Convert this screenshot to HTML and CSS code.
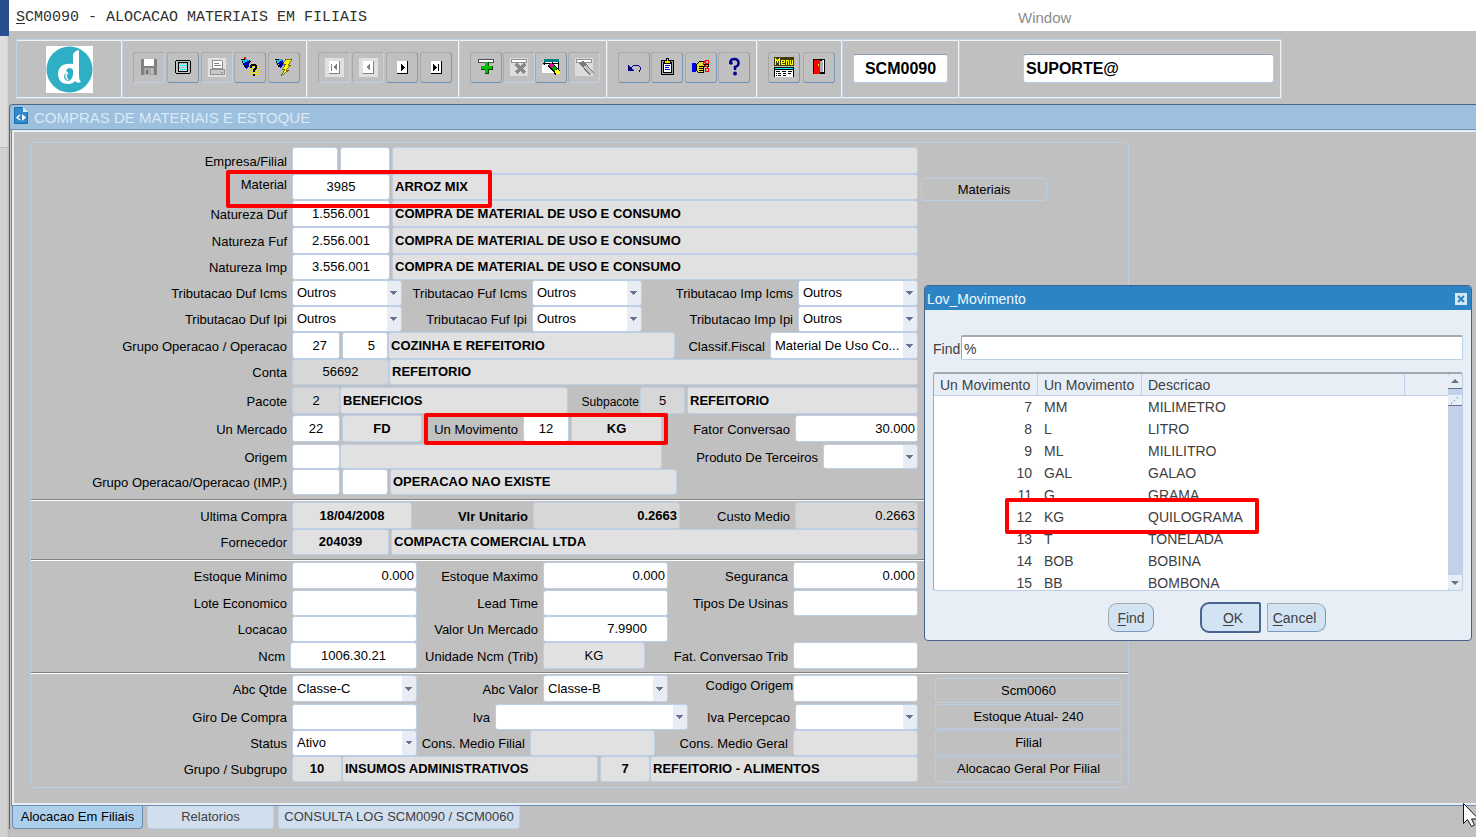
FILE: index.html
```html
<!DOCTYPE html>
<html lang="pt-BR">
<head>
<meta charset="utf-8">
<title>SCM0090 - Alocacao Materiais em Filiais</title>
<link rel="stylesheet" href="styles.css">
</head>
<body>
<div class="desktop">
  <div class="backdrop"><div class="backdrop-top"></div><div class="backdrop-mid"></div></div>
  <main class="app">
    <nav class="menubar">
      <a class="menu-main" href="#"><u>S</u>CM0090 - ALOCACAO MATERIAIS EM FILIAIS</a>
      <a class="menu-window" href="#">Window</a>
    </nav>

    <div class="toolbar">
      <div class="group group-logo">
        <svg class="logo" viewBox="0 0 47 47"><rect width="47" height="47" fill="#fff"/><circle cx="23.500" cy="23.500" r="23" fill="#2fafc5"/><path d="M33 4 Q26 5 27 12 V18 Q12 16 12 29 Q13 38 22 38 Q27 38 29 35 Q31 38 35 36 Q33 34 33 30 Z" fill="#fff"/><path d="M27 24 Q28 32 23 35 Q19 35 18 31 Q18 27 22 27 Q18 24 23 22 Q26 22 27 24Z" fill="#2fafc5"/><path d="M22 34 Q18 30 22 27" stroke="#fff" stroke-width="1.500" fill="none"/></svg>
      </div>
      <div class="group">
        <button class="tool off" aria-label="Salvar" disabled><svg viewBox="0 0 20 20"><path fill="#808080" d="M2 2h15l1 1v15H2z"/><path fill="#fff" d="M5 2h10v7H5z"/><path fill="#a8a8a8" d="M5 11h10v7H5z"/><path fill="#c0c0c0" d="M12 12h2v5h-2z"/><path fill="#707070" d="M7 13h2v4H7z"/></svg></button>
        <button class="tool" aria-label="Tela"><svg viewBox="0 0 20 20"><path d="M3 3h14v1h1v12h-1v1H3v-1H2V4h1z" fill="#000"/><path fill="#c0c0c0" d="M3 4h14v12H3z"/><path fill="#000" d="M5 5h10v10H5z"/><path fill="#c0e4e4" d="M6 6h8v8H6z"/><path fill="#00d8d8" d="M6 6h1v1H6zM8 6h1v1H8zM10 6h1v1h-1zM12 6h1v1h-1zM7 8h1v1H7zM9 8h1v1H9zM11 8h1v1h-1zM13 8h1v1h-1zM6 10h1v1H6zM8 10h1v1H8zM10 10h1v1h-1zM12 10h1v1h-1zM7 12h1v1H7zM9 12h1v1H9zM11 12h1v1h-1zM13 12h1v1h-1z"/></svg></button>
        <button class="tool off" aria-label="Imprimir" disabled><svg viewBox="0 0 20 20"><path fill="#e0e0e0" d="M1 1h18v19H1z"/><path fill="#fff" stroke="#909090" d="M5.500 3.500h9l1 1v7h-10z"/><path stroke="#808080" d="M7 6.500h5M7 8.500h7"/><path fill="#c8c8c8" stroke="#909090" d="M3.500 12.500h14v5h-14z"/><path stroke="#909090" d="M14 15.500h2"/></svg></button>
        <button class="tool" aria-label="Entrar consulta"><svg viewBox="0 0 20 20"><path fill="#00c8d8" d="M1 2h7l2 5H5z"/><path fill="#0000d0" d="M4 6l6-3-1 7-3 2z"/><path stroke="#000" fill="none" d="M1 2.500h4M2 4l3 6 5-5M9 3l2 2"/><path fill="#f00" d="M4 0h2v2H4z"/><path fill="none" stroke="#e8e000" stroke-dasharray="1 1" stroke-width="9" d="M14 9v10"/><path fill="none" stroke="#000" stroke-width="2" d="M11 11V9l1-1h3l1 1v2l-2 2v2M13 17.500h2"/></svg></button>
        <button class="tool" aria-label="Executar consulta"><svg viewBox="0 0 20 20"><path fill="#00c8d8" d="M1 2h7l2 5H5z"/><path fill="#0000d0" d="M4 6l5-3v6l-3 2z"/><path stroke="#000" fill="none" d="M1 2.500h4M2 4l3 6 5-5"/><path fill="#ff0" stroke="#504000" stroke-width=".7" d="M12 2h6l-4 6h3l-5 5h3l-8 6 4-7H8l4-5H9z"/></svg></button>
      </div>
      <div class="group">
        <button class="tool off" aria-label="Primeiro" disabled><svg viewBox="0 0 20 20"><path fill="#e0e0e0" d="M1 1h19v19H1z"/><path fill="#fff" d="M5 4h11v13H5z"/><path fill="#808080" d="M15 4h1v13H5v-1h10zM7 7h1v7H7zM13 7v7l-4-4z"/></svg></button>
        <button class="tool off" aria-label="Anterior" disabled><svg viewBox="0 0 20 20"><path fill="#e0e0e0" d="M1 1h19v19H1z"/><path fill="#fff" d="M5 4h11v13H5z"/><path fill="#808080" d="M15 4h1v13H5v-1h10zM12 7v7l-4-4z"/></svg></button>
        <button class="tool" aria-label="Proximo"><svg viewBox="0 0 20 20"><path fill="#fff" d="M5 4h11v13H5z"/><path d="M15 4h1v13H5v-1h10zM9 7v7l4-3.500z"/></svg></button>
        <button class="tool" aria-label="Ultimo"><svg viewBox="0 0 20 20"><path fill="#fff" d="M5 4h11v13H5z"/><path d="M15 4h1v13H5v-1h10zM7 7v7l4-3.500zM12 7h1v7h-1z"/></svg></button>
      </div>
      <div class="group">
        <button class="tool" aria-label="Inserir"><svg viewBox="0 0 20 20"><path fill="#fff" stroke="#505050" d="M2.500 2.500h15v3h-15z"/><path fill="#004800" d="M9 5h4v4h4v4h-4v4H9v-4H5V9h4z"/><path fill="#00c000" d="M9 5h3v4h4v3h-4v4H9v-4H5V9h4z"/></svg></button>
        <button class="tool off" aria-label="Remover" disabled><svg viewBox="0 0 20 20"><path fill="#dcdcdc" d="M1 1h18v18H1z"/><path fill="#fff" stroke="#909090" d="M2.500 2.500h15v3h-15z"/><path stroke="#888" stroke-width="3" d="M7 7l9 9M16 7l-9 9"/></svg></button>
        <button class="tool" aria-label="Limpar bloco"><svg viewBox="0 0 20 20"><path fill="#fff" stroke="#000" d="M3.500 2.500h14v13h-14z"/><path fill="#008080" d="M3 2h15v3H3z"/><path d="M2 6h15v1H2z"/><path fill="#fff" d="M1 8h13v8H1z"/><path stroke="#000" stroke-width="6" d="M9 7l8 9"/><path stroke="#f00090" stroke-width="4" d="M9 7l3 3"/><path stroke="#00a000" stroke-width="4" d="M12 10l3 3"/><path stroke="#ff0" stroke-width="4" d="M15 13l3 4"/></svg></button>
        <button class="tool off" aria-label="Limpar registro" disabled><svg viewBox="0 0 20 20"><path fill="#dcdcdc" d="M1 1h18v18H1z"/><path fill="#fff" stroke="#909090" d="M2.500 2.500h15v3h-15z"/><path stroke="#787878" stroke-width="5" d="M7 5l11 12"/><path stroke="#c8c8c8" stroke-width="3" d="M11 9l7 8"/></svg></button>
      </div>
      <div class="group">
        <button class="tool" aria-label="Desfazer"><svg viewBox="0 0 20 20"><path fill="#000080" d="M4 8v6h6z"/><path fill="none" stroke="#000080" stroke-width="1" d="M7 11l3-3h4l2 2v3l-1 2"/></svg></button>
        <button class="tool" aria-label="Lista"><svg viewBox="0 0 20 20"><path fill="#a0a0a0" stroke="#000" d="M4.500 3.500h12v14h-12z"/><path fill="#fff" stroke="#000" d="M6.500 5.500h8v10h-8z"/><path fill="#f0e000" stroke="#000" d="M7.500 3.500h2v-2h2v2h2v3h-6z"/><path stroke="#0000e0" d="M8 8.500h5M8 10.500h4M8 12.500h5"/></svg></button>
        <button class="tool" aria-label="Editar"><svg viewBox="0 0 20 20"><path fill="#00f" d="M1 6h4v9H1z"/><path fill="#e8d840" stroke="#000" d="M5.500 7.500l3-3h4v3h5v2h-5v6h-5l-2-2z"/><path stroke="#000" d="M8 9.500h5M8 11.500h5M8 13.500h4"/><g fill="none" stroke="#f00"><circle cx="16" cy="5" r="2"/><circle cx="16" cy="13" r="2"/><path d="M14 4l-2 3 5 4"/></g></svg></button>
        <button class="tool" aria-label="Ajuda"><svg class="smooth" viewBox="0 0 20 20"><path fill="none" stroke="#000090" stroke-width="2.500" d="M6.500 7V4.500Q7 2 10.500 2T14.500 5.500 11 10v3"/><circle cx="7" cy="6" r="1.800" fill="#000090"/><circle cx="11" cy="16.500" r="2" fill="#000090"/></svg></button>
      </div>
      <div class="group">
        <button class="tool" aria-label="Menu"><svg viewBox="0 0 20 20"><path d="M0 10h20v10H0z"/><path fill="#0ff" d="M1 11h18v1H1z"/><path fill="#fff" d="M1 13h18v7H1z"/><path stroke="#000" d="M2 14.500h4M8 14.500h4M14 14.500h4M2 16.500h1M4 16.500h3M9 16.500h3M14 16.500h3M2 18.500h1M4 18.500h3M9 18.500h3"/><path fill="#403c00" d="M0 0h20v9H0z"/><path fill="none" stroke="#ff0" d="M1.500 8V1M2.500 2v2M3.500 3v3M4.500 2v2M5.500 1v7M10.500 7.500h-3v-4h3v2h-3M12.500 8V3.500h2V8M16.500 3v4.500h2V3"/></svg></button>
        <button class="tool" aria-label="Sair"><svg viewBox="0 0 20 20"><path d="M4 2h12v15H4z"/><path fill="#fff" d="M13 3h2v12h-2z"/><path fill="#b0b0b0" d="M11 4h3v11h-3z"/><path fill="#f00" d="M5 3h5l1 1v13H5z"/><path fill="#ff0" d="M9 7h1v2H9z"/></svg></button>
      </div>
      <div class="group group-code"><input class="bar-input center" value="SCM0090" aria-label="Programa"></div>
      <div class="group group-user"><input class="bar-input" value="SUPORTE@" aria-label="Usuario"></div>
    </div>

    <section class="window">
      <header class="window-title">
        <svg class="doc-icon" viewBox="0 0 14 17"><path fill="#2f8bcb" stroke="#1b6fae" d="M.5.500h8l5 5v11H.5z"/><path fill="#d8ecfa" d="M9 0l5 5H9z"/><path fill="none" stroke="#fff" stroke-width="1.500" d="M6 8L3 10.500 6 13"/><path fill="#fff" d="M8 7v7l4-3.500z"/></svg>
        <h1>COMPRAS DE MATERIAIS E ESTOQUE</h1>
      </header>
      <div class="frame">
        <form class="panel">
          <div class="section">
            <div class="rows rows-a">
              <div class="row c-empresa"><label for="empresa">Empresa/Filial</label><input id="empresa"><input class="gap" aria-label="Filial"><input class="gap ro" readonly aria-label="Nome filial"></div>
              <div class="row c-nature"><label class="high" for="material">Material</label><input id="material" class="center" value="3985"><input class="gap ro b" readonly value="ARROZ MIX" aria-label="Nome material"><span class="mark mark-material"></span></div>
              <div class="row c-nature"><label for="duf">Natureza Duf</label><input id="duf" class="center" value="1.556.001"><input class="gap ro b" readonly value="COMPRA DE MATERIAL DE USO E CONSUMO" aria-label="Descricao Duf"></div>
              <div class="row c-nature"><label for="fuf">Natureza Fuf</label><input id="fuf" class="center" value="2.556.001"><input class="gap ro b" readonly value="COMPRA DE MATERIAL DE USO E CONSUMO" aria-label="Descricao Fuf"></div>
              <div class="row c-nature"><label for="imp">Natureza Imp</label><input id="imp" class="center" value="3.556.001"><input class="gap ro b" readonly value="COMPRA DE MATERIAL DE USO E CONSUMO" aria-label="Descricao Imp"></div>
              <div class="row c-trib"><label for="t1">Tributacao Duf Icms</label><select id="t1"><option>Outros</option></select><label for="t2">Tributacao Fuf Icms</label><select id="t2"><option>Outros</option></select><label for="t3">Tributacao Imp Icms</label><select id="t3"><option>Outros</option></select></div>
              <div class="row c-trib"><label for="t4">Tributacao Duf Ipi</label><select id="t4"><option>Outros</option></select><label for="t5">Tributacao Fuf Ipi</label><select id="t5"><option>Outros</option></select><label for="t6">Tributacao Imp Ipi</label><select id="t6"><option>Outros</option></select></div>
              <div class="row c-grupo"><label for="grupo">Grupo Operacao / Operacao</label><input id="grupo" class="right inset" value="27"><input class="gap right inset" value="5" aria-label="Operacao"><input class="ro b" readonly value="COZINHA E REFEITORIO" aria-label="Descricao operacao"><label for="fiscal">Classif.Fiscal</label><select id="fiscal"><option>Material De Uso Co...</option></select></div>
              <div class="row spaced c-conta"><label for="conta">Conta</label><input id="conta" class="dim center" readonly value="56692"><input class="ro b" readonly value="REFEITORIO" aria-label="Descricao conta"></div>
              <div class="row slim c-pacote"><label for="pacote">Pacote</label><input id="pacote" class="dim center" readonly value="2"><input class="ro b" readonly value="BENEFICIOS" aria-label="Descricao pacote"><label class="small" for="subpacote">Subpacote</label><input id="subpacote" class="dim center" readonly value="5"><input class="gap ro b" readonly value="REFEITORIO" aria-label="Descricao subpacote"></div>
              <div class="row spaced c-mercado"><label for="mercado">Un Mercado</label><input id="mercado" class="center" value="22"><input class="gap ro b center" readonly value="FD" aria-label="Sigla mercado"><div class="marked"><label for="mov">Un Movimento</label><input id="mov" class="center" value="12"><input class="gap ro b center" readonly value="KG" aria-label="Sigla movimento"><span class="mark mark-mov"></span></div><label for="fator">Fator Conversao</label><input id="fator" class="right" value="30.000"></div>
              <div class="row c-origem"><label for="origem">Origem</label><input id="origem"><input class="ro" readonly aria-label="Descricao origem"><label for="terceiros">Produto De Terceiros</label><select id="terceiros"><option></option></select></div>
              <div class="row c-oper"><label for="gimp">Grupo Operacao/Operacao (IMP.)</label><input id="gimp"><input class="gap" aria-label="Operacao importacao"><input class="gap ro b" readonly value="OPERACAO NAO EXISTE" aria-label="Descricao importacao"></div>
            </div>
            <div class="side side-a"><button type="button" class="action">Materiais</button></div>
          </div>
          <hr>
          <div class="section">
            <div class="rows rows-b">
              <div class="row c-compra"><label for="ultima">Ultima Compra</label><input id="ultima" class="ro b center" readonly value="18/04/2008"><label class="b" for="vlr">Vlr Unitario</label><input id="vlr" class="dim b right" readonly value="0.2663"><label for="custo">Custo Medio</label><input id="custo" class="dim right" readonly value="0.2663"></div>
              <div class="row c-conta"><label for="forn">Fornecedor</label><input id="forn" class="ro b center" readonly value="204039"><input class="ro b gap" readonly value="COMPACTA COMERCIAL LTDA" aria-label="Nome fornecedor"></div>
            </div>
          </div>
          <hr>
          <div class="section">
            <div class="rows rows-c">
              <div class="row slim c-est"><label for="emin">Estoque Minimo</label><input id="emin" class="right" value="0.000"><label for="emax">Estoque Maximo</label><input id="emax" class="right" value="0.000"><label for="seg">Seguranca</label><input id="seg" class="right" value="0.000"></div>
              <div class="row c-est"><label for="lote">Lote Economico</label><input id="lote"><label for="lead">Lead Time</label><input id="lead"><label for="usinas">Tipos De Usinas</label><input id="usinas"></div>
              <div class="row c-est"><label for="loc">Locacao</label><input id="loc"><label for="vmerc">Valor Un Mercado</label><input id="vmerc" class="right far" value="7.9900"></div>
              <div class="row c-ncm"><label for="ncm">Ncm</label><input id="ncm" class="center" value="1006.30.21"><label for="uncm">Unidade Ncm (Trib)</label><input id="uncm" class="ro center" readonly value="KG"><label for="fat">Fat. Conversao Trib</label><input id="fat"></div>
            </div>
          </div>
          <hr class="near">
          <div class="section">
            <div class="rows rows-d">
              <div class="row spaced c-est"><label for="abcq">Abc Qtde</label><select id="abcq"><option>Classe-C</option></select><label for="abcv">Abc Valor</label><select id="abcv"><option>Classe-B</option></select><label class="high tight" for="cod">Codigo Origem</label><input id="cod"></div>
              <div class="row c-iva"><label for="giro">Giro De Compra</label><input id="giro"><label for="iva">Iva</label><select id="iva"><option></option></select><label for="ivap">Iva Percepcao</label><select id="ivap"><option></option></select></div>
              <div class="row c-status"><label for="status">Status</label><select id="status"><option>Ativo</option></select><label for="cmf">Cons. Medio Filial</label><input id="cmf" class="ro" readonly><label for="cmg">Cons. Medio Geral</label><input id="cmg" class="ro" readonly></div>
              <div class="row c-sub"><label for="sub">Grupo / Subgrupo</label><input id="sub" class="ro b center" readonly value="10"><input class="ro b" readonly value="INSUMOS ADMINISTRATIVOS" aria-label="Descricao grupo"><input class="gap ro b center" readonly value="7" aria-label="Subgrupo"><input class="ro b" readonly value="REFEITORIO - ALIMENTOS" aria-label="Descricao subgrupo"></div>
            </div>
            <div class="side side-d">
              <button type="button" class="action">Scm0060</button>
              <button type="button" class="action">Estoque Atual- 240</button>
              <button type="button" class="action">Filial</button>
              <button type="button" class="action">Alocacao Geral Por Filial</button>
            </div>
          </div>
        </form>
      </div>
      <div class="tabs">
        <button class="tab active">Alocacao Em Filiais</button>
        <button class="tab">Relatorios</button>
        <button class="tab wide">CONSULTA LOG SCM0090 / SCM0060</button>
      </div>
    </section>
  </main>

  <section class="dialog">
    <header class="dialog-title"><h2>Lov_Movimento</h2><button class="close" aria-label="Fechar"><svg viewBox="0 0 12 12"><path stroke="#2c84c4" stroke-width="2" d="M3 3l6 6M9 3l-6 6"/></svg></button></header>
    <div class="dialog-body">
      <div class="find"><label for="find">Find</label><input id="find" value="%"></div>
      <div class="list">
        <table>
          <thead><tr><th class="num">Un Movimento</th><th class="code">Un Movimento</th><th>Descricao</th><th class="tail"></th></tr></thead>
          <tbody>
            <tr><td>7</td><td>MM</td><td>MILIMETRO</td><td></td></tr>
            <tr><td>8</td><td>L</td><td>LITRO</td><td></td></tr>
            <tr><td>9</td><td>ML</td><td>MILILITRO</td><td></td></tr>
            <tr><td>10</td><td>GAL</td><td>GALAO</td><td></td></tr>
            <tr><td>11</td><td>G</td><td>GRAMA</td><td></td></tr>
            <tr><td>12</td><td>KG</td><td>QUILOGRAMA</td><td></td></tr>
            <tr><td>13</td><td>T</td><td>TONELADA</td><td></td></tr>
            <tr><td>14</td><td>BOB</td><td>BOBINA</td><td></td></tr>
            <tr><td>15</td><td>BB</td><td>BOMBONA</td><td></td></tr>
          </tbody>
        </table>
        <div class="scroll">
          <button class="up" aria-label="Subir"><svg viewBox="0 0 14 14"><path fill="#68708c" d="M3 9l4-4 4 4z"/></svg></button>
          <div class="thumb"><svg viewBox="0 0 14 10"><path stroke="#7890b8" stroke-dasharray="2 2" d="M3 9l8-8"/></svg></div>
          <button class="down" aria-label="Descer"><svg viewBox="0 0 14 14"><path fill="#68708c" d="M3 5h8L7 9z"/></svg></button>
        </div>
        <span class="mark mark-row"></span>
      </div>
      <div class="dialog-actions"><button class="btn btn-find"><u>F</u>ind</button><button class="btn btn-ok"><u>O</u>K</button><button class="btn btn-cancel"><u>C</u>ancel</button></div>
    </div>
  </section>

  <svg class="cursor" viewBox="0 0 13 24"><path fill="#fff" stroke="#101020" d="M.5.500v20l4-4 4 7 3-1.500-3-6h7z"/></svg>
</div>
</body>
</html>
```

FILE: styles.css
```css
* { box-sizing: border-box; }

body {
  margin: 0;
  background: #c0c0c0;
  font: 13px/16px "Liberation Sans", Arial, sans-serif;
  color: #000;
}

button, input, select { font: inherit; color: inherit; margin: 0; min-width: 0; }
h1, h2 { margin: 0; font-weight: normal; }

.desktop {
  position: relative;
  display: grid;
  grid-template-columns: 9px minmax(0, 1fr);
  min-height: 100vh;
  overflow: hidden;
}

/* strip of the window lying behind the application */
.backdrop { background: linear-gradient(to right, #d0d0d0 7px, #b0b0b0); }
.backdrop-top { height: 36px; background: #28508f; }
.backdrop-mid { height: 112px; background: linear-gradient(to right, #dedede 7px, #b4b4b4); border-bottom: 1px solid #b8b8b8; }

/* menu bar */
.menubar { display: flex; height: 31px; padding: 5px 7px 0; align-items: center; background: #fff; }
.menubar a { text-decoration: none; }
.menubar u { text-underline-offset: 2px; }
.menu-main { width: 1002px; color: #303030; font: 15px/18px "Liberation Mono", "Courier New", monospace; }
.menu-window { color: #8c8c8c; font-size: 15px; line-height: 18px; }

/* toolbar */
.toolbar {
  display: grid;
  grid-template-columns: 107px 185px 152px 148px 150px 85px 117px minmax(0, 322px);
  height: 60px;
  margin: 8px 7px 5px;
}
.group {
  display: flex;
  align-items: center;
  justify-content: space-between;
  padding: 0 7px 3px 10px;
  border: solid #c0d2ea;
  border-width: 1px 1px 1px 0;
  box-shadow: inset -1px 0 #f0f4fa, inset 0 1px #f0f4fa, inset 0 -1px #f0f4fa;
}
.group-logo { justify-content: center; border-left-width: 1px; padding: 0; }
.logo { width: 47px; height: 47px; }
.group-code { padding: 0 11px 1px 10px; }
.group-user { padding: 0 7px 1px 63px; }
.tool {
  display: grid;
  place-items: center;
  width: 32px;
  height: 31px;
  padding: 0 0 1px;
  border: solid;
  border-width: 1px;
  border-color: #a8a8a8 #7898bc #6890b8 #a8a8a8;
  border-radius: 3px;
  background: #c0c0c0;
}
.tool.off { border-color: #a8a8a8 #c0d0e8 #c0d0e8 #a8a8a8; }
.tool svg { width: 20px; height: 20px; shape-rendering: crispEdges; }
.tool svg.smooth { shape-rendering: auto; }
.bar-input {
  width: 100%;
  height: 29px;
  padding: 0 2px;
  border: 1px solid #b4cce8;
  border-top-color: #909cb0;
  border-radius: 3px;
  background: #fff;
  font-size: 16px;
  font-weight: bold;
}

/* child window */
.window { border-top: 1px solid #4a688c; border-left: 1px solid #4a688c; border-radius: 4px 0 0; }
.window-title {
  display: flex;
  align-items: center;
  gap: 6px;
  height: 25px;
  padding-left: 4px;
  background: #9dc0df;
  border-bottom: 1px solid #6c8cb0;
  border-radius: 4px 0 0;
}
.doc-icon { width: 14px; height: 17px; margin-bottom: 4px; }
.window-title h1 { color: #dbe9f6; font-size: 15px; line-height: 18px; padding-top: 2px; }
.frame {
  margin-left: 2px;
  padding: 10px 15px 15px 16px;
  border: solid #e8eef6;
  border-width: 2px 0 2px 2px;
  outline: 1px solid #6c8cb0;
}
.panel {
  max-width: 1099px;
  padding: 4px 0 5px;
  border: 1px solid #bccde4;
  border-radius: 4px;
}
.section { display: grid; grid-template-columns: minmax(0, 1fr) 210px; }
.panel hr { height: 2px; margin: 4px 0 1px; border: 0; border-top: 1px solid #808080; background: #fff; }
.panel hr.near { margin-top: 3px; }

.rows { display: grid; }
.rows-a { grid-template-rows: 27px 26px 27px 27px 26px 26px 26px 27px 28px 28px 29px 25px 26px; }
.rows-b { grid-template-rows: 27px 26px; }
.rows-c { grid-template-rows: 28px 26px 26px 27px; }
.rows-d { grid-template-rows: 29px 26px 26px 26px; }
.row { position: relative; display: grid; }
.spaced { padding-bottom: 2px; }
.slim { padding-bottom: 1px; }

.c-empresa { grid-template-columns: 261px 46px 52px minmax(0, 1fr); }
.c-nature { grid-template-columns: 261px 98px minmax(0, 1fr); }
.c-trib { grid-template-columns: 261px 110px 130px 110px 156px minmax(0, 1fr); }
.c-grupo { grid-template-columns: 261px 48px 48px 287px 95px minmax(0, 1fr); }
.c-conta { grid-template-columns: 261px 97px minmax(0, 1fr); }
.c-pacote { grid-template-columns: 261px 48px 228px 72px 45px minmax(0, 1fr); }
.c-mercado { grid-template-columns: 261px 48px 82px 242px 131px minmax(0, 1fr); }
.c-origem { grid-template-columns: 261px 48px 322px 161px minmax(0, 1fr); }
.c-oper { grid-template-columns: 261px 48px 48px 289px minmax(0, 1fr); }
.c-compra { grid-template-columns: 261px 120px 121px 147px 115px minmax(0, 1fr); }
.c-est { grid-template-columns: 261px 125px 126px 125px 125px minmax(0, 1fr); }
.c-ncm { grid-template-columns: 259px 127px 126px 102px 148px minmax(0, 1fr); }
.c-iva { grid-template-columns: 261px 125px 78px 193px 107px minmax(0, 1fr); }
.c-status { grid-template-columns: 261px 125px 113px 125px 138px minmax(0, 1fr); }
.c-sub { grid-template-columns: 261px 50px 256px 52px minmax(0, 1fr); }

.row label { align-self: center; padding: 2px 5px 0 0; text-align: right; white-space: nowrap; }
.row label.high { align-self: start; padding-top: 3px; }
.row label.tight { padding-right: 0; }
.row label.small { padding-right: 1px; font-size: 12px; }
.row input, .row select {
  width: 100%;
  height: 100%;
  padding: 0 2px 1px;
  border: 1px solid #bccfe6;
  border-radius: 3px;
  background-color: #fff;
}
.row .ro { background-color: #e1e1e1; }
.row .dim { background-color: #d7d7d7; }
.row .gap { margin-left: 2px; width: calc(100% - 2px); }
.row .right { text-align: right; }
.row .inset { padding-right: 12px; }
.row .far { padding-right: 20px; }
.center { text-align: center; }
.b { font-weight: bold; }
.row select {
  appearance: none;
  padding: 0 0 0 4px;
  background-image:
    linear-gradient(to bottom left, #6b7290 50%, transparent 50%),
    linear-gradient(to bottom right, #6b7290 50%, transparent 50%),
    linear-gradient(#e8edf5, #e8edf5);
  background-repeat: no-repeat;
  background-position: right 7px center, right 3px center, right 0 center;
  background-size: 4px 4px, 4px 4px, 14px 100%;
}

/* red highlight frames */
.mark { position: absolute; border: 4px solid #fc0000; border-radius: 2px; pointer-events: none; z-index: 1; }
.mark-material { left: 195px; top: -4px; width: 266px; height: 38px; }
.mark-mov { inset: -2px -4px -3px 2px; }
.mark-row { left: 71px; top: 124px; width: 254px; height: 36px; }
.marked { position: relative; display: grid; grid-template-columns: 101px 46px 93px; }

.side-a { padding: 31px 0 0 3px; }
.side-a .action { width: 126px; height: 23px; }
.side-d { display: grid; grid-template-rows: 25px 25px 25px 26px; gap: 1px; padding: 3px 6px 0 17px; }
.action {
  padding: 0;
  border: 1px solid #bccde4;
  border-radius: 3px;
  background: #c0c0c0;
}

/* bottom tabs */
.tabs { display: flex; gap: 4px; margin: 1px 0 8px 2px; }
.tab {
  width: 127px;
  height: 23px;
  padding: 0;
  border: 1px solid #bed0e8;
  border-top: 0;
  border-radius: 0 0 4px 4px;
  background: #d0deee;
  color: #404040;
}
.tab.wide { width: 242px; }
.tab.active { width: 131px; background: #aecfeb; border-color: #6c8cb0; color: #000; }

/* list of values dialog */
.dialog {
  position: absolute;
  left: 924px;
  top: 285px;
  width: 548px;
  z-index: 2;
  border: 1px solid #44628e;
  border-radius: 4px;
  background: #e8eef6;
  color: #404040;
  font-size: 14px;
}
.dialog-title {
  display: flex;
  align-items: center;
  justify-content: space-between;
  height: 24px;
  padding: 2px 4px 0 2px;
  background: #2c84c4;
  color: #f4f8fc;
  border-radius: 3px 3px 0 0;
}
.dialog-title h2 { font-size: 14px; }
.close { display: grid; width: 12px; height: 12px; padding: 0; border: 0; background: #d4e8f8; }
.dialog-body { padding: 25px 8px 7px; }
.find { display: flex; align-items: center; }
.find label { width: 28px; padding-top: 3px; }
.find input {
  flex: 1;
  height: 25px;
  padding: 2px 2px 0;
  border: 1px solid #c0d0e8;
  border-top: 2px solid #a4a8b0;
  border-left-color: #a4a8b0;
  border-radius: 2px;
  background: #fff;
}
.list {
  position: relative;
  display: grid;
  grid-template-columns: minmax(0, 1fr) 14px;
  grid-template-rows: 100%;
  align-items: start;
  height: 219px;
  margin-top: 12px;
  border: 1px solid #bccfe6;
  border-top: 2px solid #a4a8b0;
  border-left-color: #a4a8b0;
  border-radius: 3px;
  background: #fff;
  overflow: hidden;
}
.list table { width: 100%; table-layout: fixed; border-collapse: separate; border-spacing: 0; }
.list th {
  height: 22px;
  padding: 0 6px;
  font-weight: normal;
  text-align: left;
  white-space: nowrap;
  background: #e8eef6;
  border-right: 1px solid #c0d0e8;
  border-bottom: 1px solid #c0d0e8;
}
.list th.num, .list th.code { width: 104px; }
.list th.tail { width: 43px; border-right: 0; }
.list td { height: 22px; padding: 0 6px; }
.list td:first-child { text-align: right; }
.scroll { display: flex; flex-direction: column; height: 100%; background: #c0d1e8; }
.scroll button, .thumb { display: block; flex: none; width: 14px; padding: 0; border: 0; border-bottom: 1px solid #68708c; background: #e8eef6; }
.scroll button { height: 15px; border-radius: 3px 3px 0 0; }
.scroll svg { display: block; width: 100%; }
.thumb { margin-top: 6px; height: 11px; }
.scroll .down { margin-top: auto; border-bottom: 0; border-radius: 0 0 3px 3px; }

.dialog-actions { display: flex; align-items: center; margin-top: 11px; padding-left: 175px; }
.btn {
  height: 29px;
  padding: 0;
  border: 1px solid #7898bc;
  border-top-color: #a8a8a8;
  border-left-color: #a8a8a8;
  border-radius: 9px;
  background: #d2e4f4;
}
.btn u { text-underline-offset: 2px; }
.btn-find { width: 46px; }
.btn-ok { width: 61px; height: 31px; margin: 0 6px 0 46px; padding-left: 5px; border: 2px solid #4a6490; border-radius: 9px 2px 2px 9px; }
.btn-cancel { width: 59px; padding-right: 4px; border-radius: 2px 9px 9px 2px; }

.cursor { position: absolute; right: 0; top: 803px; width: 13px; height: 24px; z-index: 3; }
```
